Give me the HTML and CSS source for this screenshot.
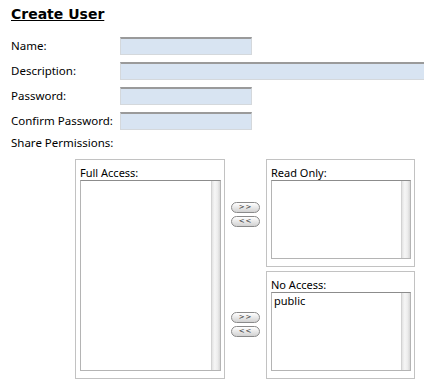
FILE: index.html
```html
<!DOCTYPE html>
<html lang="en">

<head>
    <meta charset="UTF-8">
    <title>Create User</title>
    <link rel="stylesheet" href="styles.css">
</head>

<body>
    <h1>Create User</h1>
    <form action="" id="userForm">
        <div class="fields">
            <label for="name">Name:</label>
            <input type="text" id="name" class="short">
            <label for="desc">Description:</label>
            <input type="text" id="desc" class="wide">
            <label for="pass">Password:</label>
            <input type="password" id="pass" class="short">
            <label for="cpass">Confirm Password:</label>
            <input type="password" id="cpass" class="short">
        </div>
        <div class="share-label">Share Permissions:</div>
        <div class="perms">
            <div class="box">
                <div class="box-title">Full Access:</div>
                <div class="list list-tall">
                    <div class="items"></div>
                    <div class="track"></div>
                </div>
            </div>
            <div class="moves">
                <div class="move-grp">
                    <button type="button" class="move">&gt;&gt;</button>
                    <button type="button" class="move">&lt;&lt;</button>
                </div>
                <div class="move-grp">
                    <button type="button" class="move">&gt;&gt;</button>
                    <button type="button" class="move">&lt;&lt;</button>
                </div>
            </div>
            <div class="right-col">
                <div class="box">
                    <div class="box-title">Read Only:</div>
                    <div class="list list-short">
                        <div class="items"></div>
                        <div class="track"></div>
                    </div>
                </div>
                <div class="box">
                    <div class="box-title">No Access:</div>
                    <div class="list list-short">
                        <div class="items">
                            <div class="item">public</div>
                        </div>
                        <div class="track"></div>
                    </div>
                </div>
            </div>
        </div>
    </form>
</body>

</html>
```

FILE: styles.css
```css
html,
body {
    overflow: hidden;
}

body {
    font-family: "Noto Sans", "DejaVu Sans", sans-serif;
    font-size: 11.5px;
    color: #000;
    background: #fff;
    margin: 0;
    padding: 0 0 0 10px;
}

h1 {
    font-family: "DejaVu Sans", sans-serif;
    font-size: 14px;
    line-height: 16px;
    font-weight: bold;
    text-decoration: underline;
    margin: 6px 0 15px 1px;
}

.fields {
    display: grid;
    grid-template-columns: 110px auto;
    grid-auto-rows: 18px;
    row-gap: 7px;
    align-items: center;
}

.fields label {
    padding-left: 1px;
    line-height: 16px;
}

.fields input {
    box-sizing: border-box;
    height: 18px;
    margin: 0;
    padding: 0 3px;
    background: #d8e4f2;
    border: 1px solid #d4d8dc;
    border-top: 2px solid #9a9a9a;
    font-size: 12px;
}

.fields input:focus {
    outline: none;
}

.short {
    width: 132px;
}

.wide {
    width: 320px;
}

.share-label {
    line-height: 16px;
    margin: 5px 0 0 1px;
}

.perms {
    display: flex;
    margin: 8px 0 0 65px;
}

.box {
    box-sizing: border-box;
    border: 1px solid #c2c2c2;
    padding: 5px 3px 7px 4px;
    width: 150px;
}

.right-col {
    display: flex;
    flex-direction: column;
    gap: 4px;
}

.right-col .box {
    width: 149px;
}

.box-title {
    font-size: 11px;
    line-height: 15px;
}

.list {
    display: flex;
    border: 1px solid #b4b4b4;
    border-top-color: #8c8c8c;
    background: #fff;
}

.list-tall {
    height: 189px;
}

.list-short {
    height: 77px;
}

.items {
    flex: 1;
    padding: 1px 2px;
}

.item {
    font-size: 11px;
    line-height: 13px;
}

.track {
    width: 8px;
    border-left: 1px solid #d2d2d2;
    background: linear-gradient(to right, #e2e2e2, #f6f6f6 35%, #ececec 70%, #d6d6d6);
}

.moves {
    width: 41px;
    display: flex;
    flex-direction: column;
}

.move-grp {
    flex: 1;
    display: flex;
    flex-direction: column;
    align-items: center;
    justify-content: center;
    gap: 3px;
}

.move {
    box-sizing: border-box;
    width: 29px;
    height: 11px;
    padding: 0;
    border: 1px solid #8a8a8a;
    border-radius: 6px;
    background: linear-gradient(#ffffff, #e6e6e6 55%, #d2d2d2);
    font-family: "DejaVu Sans", sans-serif;
    font-size: 7px;
    line-height: 9px;
    letter-spacing: 1px;
    color: #333;
    cursor: pointer;
}
```
